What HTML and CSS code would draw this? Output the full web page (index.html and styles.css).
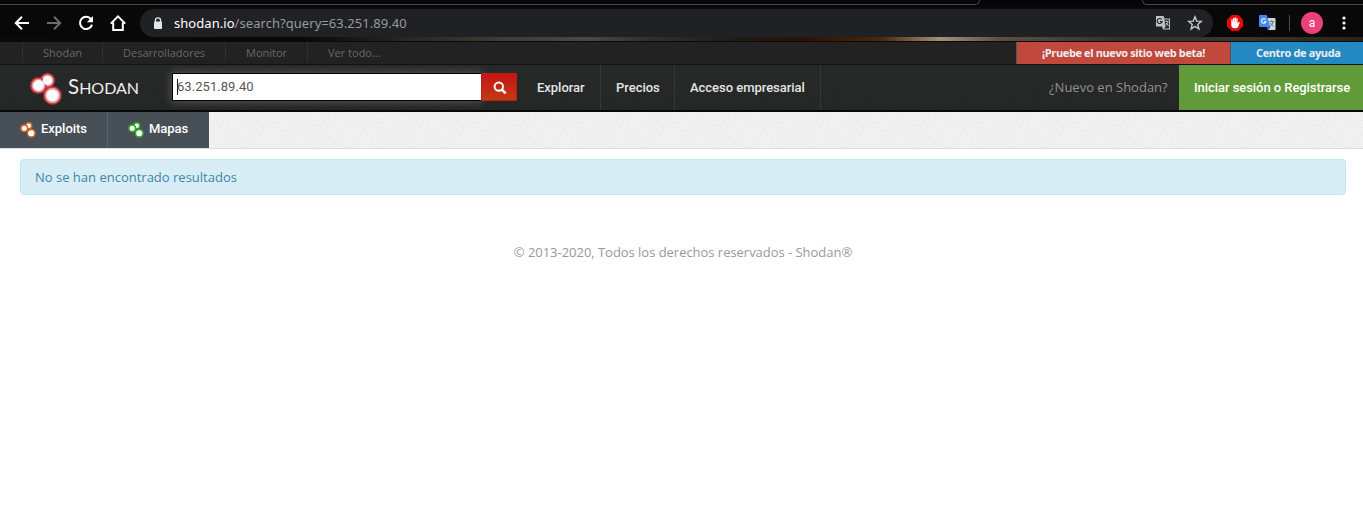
FILE: index.html
```html
<!DOCTYPE html>
<html lang="es">
<head>
<meta charset="utf-8">
<title>63.251.89.40 - Shodan Search</title>
<link rel="stylesheet" href="styles.css">
</head>
<body>
<svg class="defs" width="0" height="0">
  <symbol id="circles" viewBox="0 0 32 32">
    <g fill="#fff" stroke="currentColor" stroke-width="3">
      <circle cx="17.500" cy="7.500" r="6"/><circle cx="8.500" cy="12.500" r="6.600"/><circle cx="22.500" cy="22.500" r="7.600"/>
    </g>
  </symbol>
</svg>

<div class="browser">
  <div class="tabline"><span class="edge-left"></span><span class="edge-right"></span></div>
  <div class="toolbar">
    <div class="controls">
      <svg width="16" height="16" viewBox="0 0 16 16" fill="none" stroke="#fff" stroke-width="2"><path d="M15 8H2M8 1.800 1.800 8 8 14.200"/></svg>
      <svg width="16" height="16" viewBox="0 0 16 16" fill="none" stroke="#6c6c6c" stroke-width="2"><path d="M1 8h13M8 1.800 14.200 8 8 14.200"/></svg>
      <svg width="16" height="16" viewBox="0 0 16 16"><path d="M13 4.200A6.100 6.100 0 1 0 14 9.600" fill="none" stroke="#fff" stroke-width="2"/><path d="M15 1v6.200H8.800z" fill="#fff"/></svg>
      <svg width="16" height="16" viewBox="0 0 16 16" fill="none" stroke="#fff" stroke-width="2"><path d="M.8 8.600 8 1.400l7.200 7.200M3.200 7.500V15h9.600V7.500"/></svg>
    </div>
    <div class="address">
      <svg class="lock" width="10" height="13" viewBox="0 0 10 13"><path d="M2.400 5V3.400a2.600 2.600 0 0 1 5.200 0V5" fill="none" stroke="#e3e4e6" stroke-width="1.300"/><rect x="1" y="4.500" width="8" height="7.500" rx=".8" fill="#e3e4e6"/></svg>
      <span class="url"><b>shodan.io</b>/search?query=63.251.89.40</span>
      <svg class="translate" width="16" height="16" viewBox="0 0 16 16"><path d="M1 1h7.600l.8 2.500H15v11H8L7 11.500H1z" fill="#bdbfc1"/><path d="M9.500 4.500h4.500v9H8.900l1.600-1.800z" fill="#292a2d"/><path d="M6.700 4.500A2.500 2.500 0 1 0 7.100 6.700H5" fill="none" stroke="#292a2d" stroke-width="1.200"/><path d="M10.300 6.500h3.300M11.800 5.500v1M13 6.700c-.4 2-1.300 3-2.300 4M11 8l2.600 3" fill="none" stroke="#bdbfc1" stroke-width=".9"/></svg>
      <svg class="star" width="16" height="16" viewBox="0 0 16 16"><path d="m8 1.800 1.700 4.300 4.600.3-3.500 3 1.100 4.500L8 11.400l-3.900 2.500 1.100-4.500-3.500-3 4.600-.3z" fill="none" stroke="#c6c7c9" stroke-width="1.400"/></svg>
    </div>
    <svg class="adblock" width="16" height="16" viewBox="0 0 16 16"><path d="M4.700 0h6.600L16 4.700v6.600L11.300 16H4.700L0 11.300V4.700z" fill="#e30b0b"/><path d="M4.300 8V4.700q.7-.8 1.300 0V7h.3V3.300q.7-.8 1.400 0v3.500h.3V2.700q.7-.7 1.400 0v4.100h.3V3.600q.7-.7 1.300 0v5l1-1.300q.7-.5 1.200.2L11 12.200Q10.200 13.200 8.700 13.200H7.400Q4.300 13 4.300 10z" fill="#fff"/></svg>
    <svg class="gtranslate" width="17" height="16" viewBox="0 0 17 16"><path d="M7 3h8.500q1 0 1 1v10q0 1-1 1H9z" fill="#d2d9de"/><path d="M1 0h6.800l3.700 12H1Q0 12 0 11V1Q0 0 1 0" fill="#4688f1"/><path d="M7.500 12h4L9 15.500z" fill="#3050c8"/><path d="M6.500 4.500A2.200 2.200 0 1 0 7 6.700H5" fill="none" stroke="#fff" stroke-width="1.100"/><path d="M10.500 6.500h4.500M12.600 5.300v1.200M14.300 6.700q-.7 2.800-3 4.300M11.500 8l3 3.500" fill="none" stroke="#60767f" stroke-width="1"/></svg>
    <span class="separator"></span>
    <span class="avatar">a</span>
    <svg class="menu" width="4" height="14" viewBox="0 0 4 14" fill="#fff"><circle cx="2" cy="2" r="1.600"/><circle cx="2" cy="7" r="1.600"/><circle cx="2" cy="12" r="1.600"/></svg>
  </div>
</div>

<div class="topbar">
  <nav class="toplinks"><a>Shodan</a><a>Desarrolladores</a><a>Monitor</a><a>Ver todo...</a></nav>
  <div class="callouts"><a class="beta">¡Pruebe el nuevo sitio web beta!</a><a class="help">Centro de ayuda</a></div>
</div>

<header class="header">
  <div class="brand">
    <svg class="brand-mark" width="32" height="32" viewBox="0 0 32 32">
      <g fill="#e69a9e" stroke="#cf3640" stroke-width="1.500">
        <circle cx="17.500" cy="7.500" r="6.800"/><circle cx="8.500" cy="12.500" r="7.600"/><circle cx="22.500" cy="22.500" r="8.500"/>
      </g>
      <g fill="#fff"><circle cx="17.500" cy="7.500" r="4.700"/><circle cx="8.500" cy="12.500" r="5.400"/><circle cx="22.500" cy="22.500" r="6.100"/></g>
    </svg>
    <span class="brand-name"><span class="cap">S</span>HODAN</span>
  </div>
  <div class="search"><div class="field"><i class="caret"></i><span>63.251.89.40</span></div>
    <div class="search-button"><svg width="14" height="14" viewBox="0 0 14 14" fill="none" stroke="#fff" stroke-width="2"><circle cx="5.800" cy="5.600" r="4.200"/><path d="m8.800 8.600 3.800 3.800" stroke-width="2.600"/></svg></div></div>
  <nav class="mainnav"><a class="explore">Explorar</a><a class="prices">Precios</a><a class="access">Acceso empresarial</a></nav>
  <span class="newuser">¿Nuevo en Shodan?</span>
  <a class="login">Iniciar sesión o Registrarse</a>
</header>

<div class="subnav">
  <a class="tab exploits"><svg width="16" height="16"><use href="#circles"/></svg><span>Exploits</span></a>
  <a class="tab maps"><svg width="16" height="16"><use href="#circles"/></svg><span>Mapas</span></a>
</div>

<main><div class="alert"><span>No se han encontrado resultados</span></div></main>
<footer><span>© 2013-2020, Todos los derechos reservados - Shodan®</span></footer>
</body>
</html>
```
FILE: styles.css
```css
* { box-sizing: border-box; }
body { margin: 0; background: #fff; font-family: "Open Sans", sans-serif; font-size: 13px; height: 507px; overflow: hidden; white-space: nowrap; }
svg { display: block; flex: none; }
.defs { position: absolute; }

.browser { height: 42px; border-bottom: 1px solid #0a0a0a; background: linear-gradient(#080808, #080808) 0 5px / 100% 32px no-repeat, linear-gradient(90deg, #0a0a0a 0, #090807 300px, #28241f 400px, #3e3b38 500px, #4b4744 590px, #312f2e 650px, #211b18 740px, #2b1204 800px, #4b2608 880px, #a39178 940px, #5e4f45 1000px, #37302b 1120px, #393633 1240px, #242321 1363px) 0 36px / 100% 5px no-repeat, #060606; }
.tabline { height: 5px; display: flex; justify-content: space-between; }
.edge-left { width: 980px; border: solid #494949; border-width: 0 1px 1px 0; border-radius: 0 0 5px 0; }
.edge-right { width: 221px; border: solid #494949; border-width: 0 0 1px 1px; border-radius: 0 0 0 5px; }
.toolbar { height: 36px; display: flex; align-items: center; }
.controls { display: flex; gap: 16px; padding-left: 14px; width: 140px; }
.address { width: 1073px; height: 28px; border-radius: 14px; background: #202125; display: flex; align-items: center; }
.lock { margin-left: 13px; }
.url { margin-left: 11px; width: 980px; color: #969a9f; font: 13px/18px "Noto Sans", sans-serif; letter-spacing: .05px; }
.url b { color: #fff; font-weight: 400; }
.translate { margin-left: 1px; }
.star { margin-left: 16px; }
.adblock { margin-left: 14px; }
.gtranslate { margin-left: 16px; }
.separator { width: 1px; height: 16px; background: #4c4c4c; margin-left: 13px; }
.avatar { width: 22px; height: 22px; border-radius: 50%; background: #ec407a; color: #fff; margin-left: 11px; text-align: center; font: 12px/22px Roboto, sans-serif; }
.menu { margin-left: 19px; }

.topbar { height: 23px; display: flex; justify-content: space-between; background: #222; border-bottom: 1px solid #111; font-size: 11px; line-height: 22px; }
.toplinks { display: flex; padding-left: 22px; color: #686868; height: 20px; }
.toplinks a { border-left: 1px solid #303030; padding-left: 20px; width: 82px; }
.toplinks a:nth-child(1) { width: 80px; }
.toplinks a:nth-child(2) { width: 123px; }
.callouts { display: flex; color: #eee; font-weight: 700; letter-spacing: -.38px; }
.beta { width: 214px; background: #c0483d; text-align: center; border-left: 1px solid #555; }
.help { width: 133px; background: #2488c2; border-left: 1px solid #555; padding-left: 25px; }

.header { height: 47px; display: flex; border-bottom: 2px solid #080808; background: url("data:image/svg+xml,%3Csvg xmlns='http://www.w3.org/2000/svg' width='100' height='100'%3E%3Cfilter id='n'%3E%3CfeTurbulence type='fractalNoise' baseFrequency='.8' numOctaves='2' stitchTiles='stitch'/%3E%3CfeColorMatrix type='saturate' values='0'/%3E%3C/filter%3E%3Crect width='100' height='100' filter='url(%23n)' opacity='.04'/%3E%3C/svg%3E"), linear-gradient(#242525, #222424); }
.brand { width: 172px; padding: 8px 0 0 30px; display: flex; }
.brand-name { margin-left: 6px; color: #eee; font: 16px/27px Lato, sans-serif; letter-spacing: 0; }
.cap { font-size: 20.500px; }
.search { width: 345px; height: 28px; margin-top: 8px; display: flex; }
.field { width: 309px; border: 1px solid #000; border-right: 0; background: #fff; box-shadow: 0 0 8px 1px #555; color: #555; padding: 4px 0 0 4px; display: flex; font: 13px/17px Roboto, sans-serif; letter-spacing: .05px; }
.caret { width: 1px; height: 16px; margin-top: 1px; background: #222; margin-right: -1px; }
.search-button { position: relative; width: 36px; background: linear-gradient(#c81414, #c33b14); border: 1px solid #b52018; padding: 7px 0 0 11px; }
.mainnav { display: flex; color: #e5e5e5; font: 500 13px/45px Roboto, sans-serif; letter-spacing: -.03px; }
.mainnav a { border-right: 1px solid #363838; }
.explore { width: 84px; padding-left: 20px; }
.prices { width: 74px; padding-left: 15px; }
.access { width: 146px; padding-left: 15px; }
.newuser { color: #929292; margin-left: auto; width: 130px; line-height: 45px; }
.login { width: 184px; background: #609a39; color: #fff; font: 500 13px/45px Roboto, sans-serif; letter-spacing: -.06px; padding-left: 15px; }

.subnav { height: 37px; display: flex; border-bottom: 1px solid #ddd; background: url("data:image/svg+xml,%3Csvg xmlns='http://www.w3.org/2000/svg' width='100' height='100'%3E%3Cfilter id='n'%3E%3CfeTurbulence type='fractalNoise' baseFrequency='.6' numOctaves='2' stitchTiles='stitch'/%3E%3CfeColorMatrix type='matrix' values='1.500 0 0 0 0  1.500 0 0 0 0  1.500 0 0 0 0  0 0 0 0 1'/%3E%3C/filter%3E%3Crect width='100' height='100' filter='url(%23n)' opacity='.09'/%3E%3C/svg%3E"), #f1f1f1; }
.tab { display: flex; background: #475057; padding: 9px 0 0 20px; height: 36px; color: #fff; font: 500 13px/16px Roboto, sans-serif; letter-spacing: -.03px; }
.tab span { margin-left: 5px; }
.exploits { width: 108px; border-right: 1px solid #59636d; }
.exploits svg { color: #ce6425; }
.maps { width: 101px; }
.maps svg { color: #34a52c; }
.tab svg { margin-top: 1px; }

main { padding: 10px 17px 0 20px; }
.alert { height: 36px; border: 1px solid #bce8f1; border-radius: 4px; background: #d9edf7; color: #3a87ad; padding-left: 14px; line-height: 35px; }
footer { margin-top: 48px; text-align: center; color: #999; line-height: 18px; padding-left: 3px; letter-spacing: -.03px; }
```
